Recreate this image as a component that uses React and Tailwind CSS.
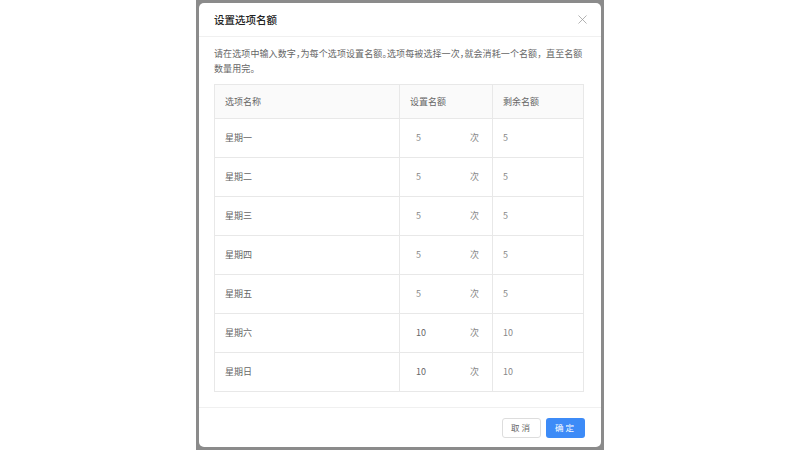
import { X } from 'lucide-react';

const rows = [
  { name: '星期一', quota: 5, left: 5 },
  { name: '星期二', quota: 5, left: 5 },
  { name: '星期三', quota: 5, left: 5 },
  { name: '星期四', quota: 5, left: 5 },
  { name: '星期五', quota: 5, left: 5 },
  { name: '星期六', quota: 10, left: 10 },
  { name: '星期日', quota: 10, left: 10 },
];

export default function App() {
  return (
    <div
      className="w-[800px] h-[450px] bg-white flex justify-center overflow-hidden"
      style={{ fontFamily: '"Noto Sans CJK SC", "Noto Sans", sans-serif' }}
    >
      {/* page behind the dimmed overlay */}
      <div className="w-[408px] h-full bg-[#8b8b8b] flex justify-center pt-[3px]">
        {/* dialog */}
        <div className="w-[402px] h-[444px] bg-white rounded-[5px] flex flex-col">
          <div className="h-[34px] shrink-0 flex items-center justify-between pl-[15px] pr-[11px] border-b border-[#f0f0f0]">
            <h3 className="text-[10.5px] font-medium text-[#222]">设置选项名额</h3>
            <X size={15} strokeWidth={1.2} className="text-[#999]" />
          </div>

          <div className="px-[15px] pt-[9px] flex-1">
            <p className="text-[9px] leading-[15px] text-[#666] mb-[8px] tracking-[0.1px] [font-feature-settings:'halt']">
              请在选项中输入数字，为每个选项设置名额。选项每被选择一次，就会消耗一个名额，&nbsp;&nbsp;直至名额
              <br />
              数量用完。
            </p>

            <table className="w-[370px] border-collapse text-[9px] text-[#666] table-fixed">
              <thead>
                <tr className="h-[34px] bg-[#fafafa]">
                  <th className="w-[185px] border border-[#e8e8e8] text-left font-normal pl-[10px]">选项名称</th>
                  <th className="w-[93px] border border-[#e8e8e8] text-left font-normal pl-[10px]">设置名额</th>
                  <th className="border border-[#e8e8e8] text-left font-normal pl-[10px]">剩余名额</th>
                </tr>
              </thead>
              <tbody>
                {rows.map((r) => (
                  <tr key={r.name} className="h-[39px]">
                    <td className="border border-[#e8e8e8] pl-[10px]">{r.name}</td>
                    <td className="border border-[#e8e8e8] pl-[16px] pr-[13px]">
                      <div className="flex justify-between text-[#888]">
                        <span className={r.quota > 9 ? 'text-[#666]' : ''}>{r.quota}</span>
                        <span>次</span>
                      </div>
                    </td>
                    <td className="border border-[#e8e8e8] pl-[10px] text-[#888]">{r.left}</td>
                  </tr>
                ))}
              </tbody>
            </table>
          </div>

          <div className="h-[40px] shrink-0 border-t border-[#f0f0f0] flex items-center justify-end gap-[5px] pr-[16px]">
            <button className="w-[39px] h-[20px] rounded-[3px] border border-[#ddd] bg-white text-[8.5px] tracking-[2px] text-[#666]">
              取消
            </button>
            <button className="w-[39px] h-[20px] rounded-[3px] bg-[#3d8bf7] text-[8.5px] tracking-[2px] text-white">
              确定
            </button>
          </div>
        </div>
      </div>
    </div>
  );
}
